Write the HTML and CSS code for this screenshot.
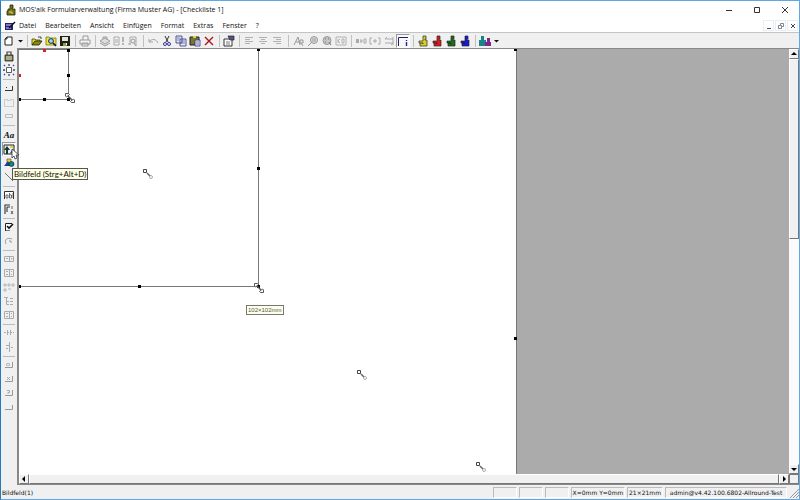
FILE: index.html
```html
<!DOCTYPE html>
<html lang="de">
<head>
  <meta charset="UTF-8">
  <meta name="viewport" content="width=device-width, initial-scale=1.0">
  <title>MOS'aik Formularverwaltung</title>
  <link rel="stylesheet" href="styles.css">
</head>
<body>
  <!-- icon set -->
  <svg class="symbols" aria-hidden="true">
    <symbol id="app" viewBox="0 0 12 12"><path d="M5 1h3v3H7v1h3v6H2V7h1V5h2z" fill="#77771a" stroke="#222200" stroke-width=".8"/><path d="M4 8h3v2" fill="none" stroke="#dede55"/></symbol>
    <symbol id="form" viewBox="0 0 12 12"><path d="M1 3h8v7H1z" fill="#20207a"/><path d="M2 5h6M2 8h5" stroke="#dde"/><path d="M5 8l6-6" stroke="#111" stroke-width="1.5"/></symbol>
    <symbol id="new" viewBox="0 0 12 12"><path d="M4 2h5v8H2V4zM4 2v2H2" fill="#fff" stroke="#222"/></symbol>
    <symbol id="open" viewBox="0 0 12 12"><path d="M1 10V4h3l1 1h4v2" fill="#dede30" stroke="#444400" stroke-width=".8"/><path d="M1 10l3-4h7l-3 4z" fill="#8a8a10" stroke="#222200" stroke-width=".8"/><path d="M7 2h3v2" fill="none" stroke="#222" stroke-width=".8"/></symbol>
    <symbol id="find" viewBox="0 0 12 12"><path d="M1 2h3l1 1h6v7H1z" fill="#f2e528" stroke="#666610" stroke-width=".7"/><circle cx="6" cy="6" r="2.4" fill="#8bdfee" stroke="#226"/><path d="M8 8l3 3" stroke="#113" stroke-width="1.6"/></symbol>
    <symbol id="save" viewBox="0 0 12 12"><path d="M1 1h10v10H1z" fill="#222211"/><path d="M3 2h6v4H3z" fill="#e5e5e5"/><path d="M4 8h4v3H4z" fill="#999944"/><path d="M7 8h1v2H7z" fill="#fff"/></symbol>
    <symbol id="print" viewBox="0 0 12 12"><path d="M4 5V1h5v4M1 5h10v4H1zM3 8h6v3H3z" fill="#f4f4f4" stroke="#999"/></symbol>
    <symbol id="stack" viewBox="0 0 12 12"><path d="M1 6l5-3 5 3-5 3zM1 8l5 3 5-3M4 4V2h4v3" fill="#ddd" stroke="#a0a0a0"/></symbol>
    <symbol id="pagealert" viewBox="0 0 12 12"><path d="M1 2h5v8H1zM2 5h3M2 7h3" fill="none" stroke="#aaa"/><path d="M10 2v5M10 8v2" stroke="#999" stroke-width="1.4"/></symbol>
    <symbol id="preview" viewBox="0 0 12 12"><path d="M3 10V2h6v9M4 9H1" fill="none" stroke="#aaa"/><circle cx="6" cy="6" r="2" fill="none" stroke="#999"/><path d="M7 8l2 3" stroke="#999"/></symbol>
    <symbol id="undo" viewBox="0 0 12 12"><path d="M2 7c3-4 7-3 9 1M2 4v3h4" fill="none" stroke="#a2a2a2"/></symbol>
    <symbol id="cut" viewBox="0 0 12 12"><path d="M4 1l3 6M8 1L5 7" stroke="#333"/><circle cx="4" cy="9" r="1.5" fill="none" stroke="#3434a0"/><circle cx="8" cy="9" r="1.5" fill="none" stroke="#3434a0"/></symbol>
    <symbol id="copy" viewBox="0 0 12 12"><path d="M1 1h6v7H1zM5 4h6v7H5z" fill="#e4e6f8" stroke="#333377" stroke-width=".8"/><path d="M2 3h3M2 5h2M6 6h4M6 8h4" stroke="#5560aa" stroke-width=".7"/></symbol>
    <symbol id="paste" viewBox="0 0 12 12"><path d="M1 2h9v8H1z" fill="#777733" stroke="#222"/><path d="M4 1h3v2H4z" fill="#ddd522"/><path d="M6 5h5v6H6z" fill="#e4e6f8" stroke="#33337a" stroke-width=".8"/><path d="M7 7h3M7 9h3" stroke="#55a" stroke-width=".7"/></symbol>
    <symbol id="delete" viewBox="0 0 12 12"><path d="M2 2l8 8M10 2l-8 8" stroke="#a81818" stroke-width="1.4"/></symbol>
    <symbol id="props" viewBox="0 0 12 12"><path d="M1 4h8v7H1z" fill="#fff" stroke="#333"/><path d="M3 7h4M3 9h4" stroke="#778"/><path d="M5 1h6v4H7z" fill="#555588" stroke="#222" stroke-width=".7"/></symbol>
    <symbol id="left" viewBox="0 0 12 12"><path d="M2 2.500h8M2 4.500h5M2 6.500h8M2 8.500h5" stroke="#b0b0b0"/></symbol>
    <symbol id="center" viewBox="0 0 12 12"><path d="M2 2.500h8M4 4.500h4M2 6.500h8M4 8.500h4" stroke="#b0b0b0"/></symbol>
    <symbol id="right" viewBox="0 0 12 12"><path d="M2 2.500h8M5 4.500h5M2 6.500h8M5 8.500h5" stroke="#b0b0b0"/></symbol>
    <symbol id="fontcolor" viewBox="0 0 12 12"><path d="M1 10l4-8 2 8M3 7h4M7 5h3v3H7zM8 8l2 3" fill="none" stroke="#999"/></symbol>
    <symbol id="fill" viewBox="0 0 12 12"><circle cx="7" cy="5" r="3.5" fill="#ddd" stroke="#999"/><path d="M1 11l4-4M5 4h4M5 6h4" stroke="#999"/></symbol>
    <symbol id="palette" viewBox="0 0 12 12"><circle cx="6" cy="5.500" r="4" fill="#c5c5c5" stroke="#999"/><path d="M4 4h1M7 4h1M4 7h1M8 7l2 3" stroke="#777"/></symbol>
    <symbol id="imgoff" viewBox="0 0 12 12"><path d="M1 2h10v8H1zM3 4v4M3 6l2-2M3 6l2 2M7 4h2v4H7z" fill="none" stroke="#b2b2b2"/></symbol>
    <symbol id="join" viewBox="0 0 12 12"><path d="M1 4h3v4H1z" fill="#aaa"/><path d="M5 6h3M6 4v4M9 4h2v4H9z" fill="none" stroke="#aaa"/></symbol>
    <symbol id="split" viewBox="0 0 12 12"><path d="M3 3H1v6h2M9 3h2v6H9M4 6h4M6 4v4" fill="none" stroke="#aaa"/></symbol>
    <symbol id="swap" viewBox="0 0 12 12"><path d="M2 4h8M4 2L2 4M2 8h8M8 10l2-2M10 2v8" fill="none" stroke="#aaa"/></symbol>
    <symbol id="ruler" viewBox="0 0 12 12"><path d="M1.500 11V2.500H11" fill="none" stroke="#222266"/><path d="M9.500 5v1M9.500 7v4" stroke="#2222aa" stroke-width="1.4"/></symbol>
    <symbol id="puzzle" viewBox="0 0 12 12"><path d="M6 1h3v3H8v1h2v6H3V8H2V6h4V4z" fill="currentColor" stroke="#282828" stroke-width=".7"/><path d="M3 8h3v1" fill="none" stroke="#222" stroke-width=".8"/></symbol>
    <symbol id="people" viewBox="0 0 12 12"><path d="M1 5h1V1h3v4h2v6H0V5z" fill="#18858a"/><path d="M7 7h1V3h3v4h1v4H6V7z" fill="#80258a"/></symbol>
    <symbol id="drop" viewBox="0 0 6 6"><path d="M1 2h5L3.500 4.500z" fill="#111"/></symbol>
    <symbol id="lock" viewBox="0 0 12 12"><path d="M4 5V2h4v3" fill="none" stroke="#444" stroke-width="1.2"/><path d="M2 5h8v6H2z" fill="#77773c" stroke="#222" stroke-width=".8"/><path d="M3 7h6M3 9h6" stroke="#ddd"/></symbol>
    <symbol id="anchor" viewBox="0 0 12 12"><path d="M3.500 3.500h5v5h-5z" fill="#fff" stroke="#333" stroke-width=".8"/><path d="M6 0v2M6 10v2M0 6h2M10 6h2M1 1l1 1M11 1l-1 1M1 11l1-1M11 11l-1-1" stroke="#334488" stroke-width="1.3"/></symbol>
    <symbol id="band" viewBox="0 0 12 12"><path d="M2 8.500h7.500V4M3 5.500h1" fill="none" stroke="#333"/></symbol>
    <symbol id="box" viewBox="0 0 12 12"><path d="M1.500 3.500h3v1h3v-1h3v7h-9z" fill="none" stroke="#aaa" stroke-dasharray="1 1"/></symbol>
    <symbol id="bar" viewBox="0 0 12 12"><path d="M2.500 4.500h7v3h-7z" fill="none" stroke="#bbb"/></symbol>
    <symbol id="image" viewBox="0 0 12 12"><path d="M1 2h10v9H1z" fill="#eef" stroke="#222"/><path d="M3 11V7H1l3-4 3 4H5v4z" fill="#123c20"/><path d="M7 10l2-3 2 3z" fill="#384888"/><path d="M7 3h3v2H7z" fill="#e4d335"/></symbol>
    <symbol id="shapes" viewBox="0 0 12 12"><path d="M4 2h4v5H4z" fill="#ead52c" stroke="#222" stroke-width=".5"/><path d="M1 9l4-5 3 5z" fill="#1d3e9c"/><circle cx="8.500" cy="7" r="2.500" fill="#12897a" stroke="#113" stroke-width=".6"/></symbol>
    <symbol id="line" viewBox="0 0 12 12"><path d="M2 2l8 8" stroke="#555" stroke-width=".8"/></symbol>
    <symbol id="edit" viewBox="0 0 12 12"><path d="M1.500 10V2.500h9V10" fill="#fff" stroke="#333"/><path d="M3 6h2v3H3zM6.500 4v5h2V6h-2M10 4v5" fill="none" stroke="#333" stroke-width=".7"/></symbol>
    <symbol id="ruled" viewBox="0 0 12 12"><path d="M2 11V2h5M4 4v5M4 4h3" fill="none" stroke="#333" stroke-width="1.1"/><path d="M9 3v3M8 8l2 3M10 8l-2 3" stroke="#444" stroke-width=".8"/></symbol>
    <symbol id="check" viewBox="0 0 12 12"><path d="M2.500 10V2.500H9" fill="#fff" stroke="#222"/><path d="M4 5l2 2 4-4" fill="none" stroke="#111" stroke-width="1.6"/><path d="M3 9.500h4" stroke="#777"/></symbol>
    <symbol id="radio" viewBox="0 0 12 12"><path d="M3 9C1 5 4 2 9 4M6 6h2v2" fill="none" stroke="#999"/></symbol>
    <symbol id="combo" viewBox="0 0 12 12"><path d="M1.500 3.500h9v5h-9zM6.500 3v6M3 5.500h2M8 5.500h1v1" fill="none" stroke="#aaa"/></symbol>
    <symbol id="list" viewBox="0 0 12 12"><path d="M1.500 2.500h9v7h-9zM6.500 2v8M3 4.500h2M3 7.500h2M8 4.500h1M8 7.500h1" fill="none" stroke="#aaa"/></symbol>
    <symbol id="tabs" viewBox="0 0 12 12"><path d="M1 3h2v2H1zM5 3h2v2H5zM9 3h2v2H9zM1 8h2v2H1zM5 8h3" fill="none" stroke="#aaa" stroke-width=".8"/></symbol>
    <symbol id="tree" viewBox="0 0 12 12"><path d="M1 2.500h4M3.500 3v6.500H6M3 6.500h3M7 6.500h3M7 9.500h3M7 3.500h3" fill="none" stroke="#aaa"/></symbol>
    <symbol id="hgrid" viewBox="0 0 12 12"><path d="M1 5.500h10M4.500 3v5M7.500 3v5" stroke="#aaa" stroke-dasharray="2 1"/></symbol>
    <symbol id="vgrid" viewBox="0 0 12 12"><path d="M6.500 1v10M3 4.500h3M8 6.500h2M3 7.500h2" stroke="#aaa"/></symbol>
    <symbol id="sum" viewBox="0 0 12 12"><path d="M2 8.500h7.500V3" fill="none" stroke="#999"/><path d="M3.500 4.500h3v2h-3z" fill="none" stroke="#bbb"/></symbol>
    <symbol id="times" viewBox="0 0 12 12"><path d="M2 8.500h7.500V3" fill="none" stroke="#999"/><path d="M4 4l3 3M7 4L4 7" stroke="#aaa"/></symbol>
    <symbol id="query" viewBox="0 0 12 12"><path d="M2 8.500h7.500V3" fill="none" stroke="#999"/><path d="M4 3.500h2.500v2H5V7" fill="none" stroke="#aaa"/></symbol>
    <symbol id="corner" viewBox="0 0 12 12"><path d="M2 8.500h7.500V4" fill="none" stroke="#999"/></symbol>
    <symbol id="link" viewBox="0 0 12 12"><path d="M5 5l3 3" stroke="#666" stroke-width="1.5"/><path d="M1.500 1.500h3v3h-3z" fill="#fff" stroke="#444"/><circle cx="9" cy="9" r="1.500" fill="#fff" stroke="#999" stroke-width=".8"/></symbol>
    <symbol id="resize" viewBox="0 0 12 12"><path d="M4 4l4 4" stroke="#555" stroke-width="1.5"/><path d="M1.500 1.500h3l1 1-3 2.500-1-1zM10.500 10.500h-3l-1-1 3-2.500 1 1z" fill="#fff" stroke="#444" stroke-width=".9"/></symbol>
  </svg>

  <div class="window">
    <header class="titlebar">
      <svg class="icon"><use href="#app"/></svg>
      <h1>MOS'aik Formularverwaltung (Firma Muster AG) - [Checkliste 1]</h1>
      <div class="controls">
        <button aria-label="Minimieren"><svg viewBox="0 0 8 8"><path d="M1 4.500h6" stroke="#333"/></svg></button>
        <button aria-label="Maximieren"><svg viewBox="0 0 8 8"><path d="M1.500 1.500h5v5h-5z" fill="none" stroke="#333"/></svg></button>
        <button aria-label="Schließen"><svg viewBox="0 0 8 8"><path d="M1 1l6 6M7 1L1 7" stroke="#333"/></svg></button>
      </div>
    </header>

    <nav class="menubar">
      <svg class="icon"><use href="#form"/></svg>
      <button>Datei</button>
      <button>Bearbeiten</button>
      <button>Ansicht</button>
      <button>Einfügen</button>
      <button>Format</button>
      <button>Extras</button>
      <button>Fenster</button>
      <button>?</button>
      <div class="mdi">
        <button aria-label="Minimieren"><svg viewBox="0 0 8 8"><path d="M2 6.500h4" stroke="#446"/></svg></button>
        <button aria-label="Wiederherstellen"><svg viewBox="0 0 8 8"><path d="M1.500 3.500h3v3h-3zM3.500 3V1.500h3v3H5" fill="none" stroke="#667" stroke-width=".8"/></svg></button>
        <button aria-label="Schließen"><svg viewBox="0 0 8 8"><path d="M2 2l4 4M6 2L2 6" stroke="#446"/></svg></button>
      </div>
    </nav>

    <div class="toolbar">
      <button aria-label="Neu"><svg class="icon"><use href="#new"/></svg></button>
      <button class="arrow" aria-label="Neu Auswahl"><svg><use href="#drop"/></svg></button>
      <span class="sep"></span>
      <button aria-label="Öffnen"><svg class="icon"><use href="#open"/></svg></button>
      <button aria-label="Suchen"><svg class="icon"><use href="#find"/></svg></button>
      <button aria-label="Speichern"><svg class="icon"><use href="#save"/></svg></button>
      <span class="sep"></span>
      <button aria-label="Drucken"><svg class="icon"><use href="#print"/></svg></button>
      <span class="sep"></span>
      <button aria-label="Stapel"><svg class="icon"><use href="#stack"/></svg></button>
      <button aria-label="Prüfen"><svg class="icon"><use href="#pagealert"/></svg></button>
      <button aria-label="Vorschau"><svg class="icon"><use href="#preview"/></svg></button>
      <span class="sep"></span>
      <button aria-label="Rückgängig"><svg class="icon"><use href="#undo"/></svg></button>
      <button aria-label="Ausschneiden"><svg class="icon"><use href="#cut"/></svg></button>
      <button aria-label="Kopieren"><svg class="icon"><use href="#copy"/></svg></button>
      <button aria-label="Einfügen"><svg class="icon"><use href="#paste"/></svg></button>
      <button aria-label="Löschen"><svg class="icon"><use href="#delete"/></svg></button>
      <span class="sep"></span>
      <button aria-label="Eigenschaften"><svg class="icon"><use href="#props"/></svg></button>
      <span class="sep"></span>
      <button aria-label="Linksbündig"><svg class="icon"><use href="#left"/></svg></button>
      <button aria-label="Zentriert"><svg class="icon"><use href="#center"/></svg></button>
      <button aria-label="Rechtsbündig"><svg class="icon"><use href="#right"/></svg></button>
      <span class="sep wide"></span>
      <button aria-label="Schriftfarbe"><svg class="icon"><use href="#fontcolor"/></svg></button>
      <button aria-label="Füllfarbe"><svg class="icon"><use href="#fill"/></svg></button>
      <button aria-label="Palette"><svg class="icon"><use href="#palette"/></svg></button>
      <button aria-label="Bild"><svg class="icon"><use href="#imgoff"/></svg></button>
      <span class="sep"></span>
      <button aria-label="Verbinden"><svg class="icon"><use href="#join"/></svg></button>
      <button aria-label="Teilen"><svg class="icon"><use href="#split"/></svg></button>
      <button aria-label="Tauschen"><svg class="icon"><use href="#swap"/></svg></button>
      <button class="pressed" aria-label="Lineal"><svg class="icon"><use href="#ruler"/></svg></button>
      <span class="sep"></span>
      <button class="yellow" aria-label="Modul gelb"><svg class="icon"><use href="#puzzle"/></svg></button>
      <button class="red" aria-label="Modul rot"><svg class="icon"><use href="#puzzle"/></svg></button>
      <button class="green" aria-label="Modul grün"><svg class="icon"><use href="#puzzle"/></svg></button>
      <button class="blue" aria-label="Modul blau"><svg class="icon"><use href="#puzzle"/></svg></button>
      <span class="sep"></span>
      <button aria-label="Benutzer"><svg class="icon"><use href="#people"/></svg></button>
      <button class="arrow" aria-label="Benutzer Auswahl"><svg><use href="#drop"/></svg></button>
    </div>

    <main class="workspace">
      <div class="toolbox">
        <button aria-label="Sperren"><svg class="icon"><use href="#lock"/></svg></button>
        <button aria-label="Anker"><svg class="icon"><use href="#anchor"/></svg></button>
        <span class="sep"></span>
        <button aria-label="Bereich"><svg class="icon"><use href="#band"/></svg></button>
        <button aria-label="Rahmen"><svg class="icon"><use href="#box"/></svg></button>
        <button aria-label="Balken"><svg class="icon"><use href="#bar"/></svg></button>
        <span class="sep wide"></span>
        <button class="text-tool">Aa</button>
        <div class="tool">
          <button class="pressed" aria-label="Bildfeld" aria-describedby="tip"><svg class="icon"><use href="#image"/></svg></button>
          <svg class="cursor" viewBox="0 0 8 12"><path d="M1 1v9l2-2 1 3 2-1-1-3h3z" fill="#fff" stroke="#333" stroke-width=".8"/></svg>
          <span class="tooltip" id="tip" role="tooltip">Bildfeld (Strg+Alt+D)</span>
        </div>
        <button aria-label="Formen"><svg class="icon"><use href="#shapes"/></svg></button>
        <button aria-label="Linie"><svg class="icon"><use href="#line"/></svg></button>
        <span class="sep"></span>
        <button aria-label="Textfeld"><svg class="icon"><use href="#edit"/></svg></button>
        <button aria-label="Memofeld"><svg class="icon"><use href="#ruled"/></svg></button>
        <span class="sep"></span>
        <button aria-label="Kontrollfeld"><svg class="icon"><use href="#check"/></svg></button>
        <button aria-label="Optionsfeld"><svg class="icon"><use href="#radio"/></svg></button>
        <span class="sep"></span>
        <button aria-label="Kombinationsfeld"><svg class="icon"><use href="#combo"/></svg></button>
        <button aria-label="Liste"><svg class="icon"><use href="#list"/></svg></button>
        <button aria-label="Register"><svg class="icon"><use href="#tabs"/></svg></button>
        <button aria-label="Baum"><svg class="icon"><use href="#tree"/></svg></button>
        <button aria-label="Tabelle"><svg class="icon"><use href="#list"/></svg></button>
        <span class="sep"></span>
        <button aria-label="Zeile"><svg class="icon"><use href="#hgrid"/></svg></button>
        <button aria-label="Spalte"><svg class="icon"><use href="#vgrid"/></svg></button>
        <span class="sep"></span>
        <button aria-label="Summe"><svg class="icon"><use href="#sum"/></svg></button>
        <button aria-label="Produkt"><svg class="icon"><use href="#times"/></svg></button>
        <button aria-label="Abfrage"><svg class="icon"><use href="#query"/></svg></button>
        <button aria-label="Ecke"><svg class="icon"><use href="#corner"/></svg></button>
      </div>

      <div class="editor">
        <div class="canvas">
          <div class="page">
            <i class="handle page-top"></i>
            <i class="handle page-side"></i>
            <div class="frame large">
              <i class="handle e"></i><i class="handle s"></i><i class="handle se"></i><i class="handle sw"></i><i class="handle ne"></i>
            </div>
            <div class="frame small">
              <i class="handle n red-handle"></i><i class="handle w red-handle"></i>
              <i class="handle e"></i><i class="handle s"></i><i class="handle se"></i><i class="handle sw"></i><i class="handle ne"></i>
            </div>
            <svg class="icon mark m1"><use href="#resize"/></svg>
            <svg class="icon mark m2"><use href="#link"/></svg>
            <svg class="icon mark m3"><use href="#resize"/></svg>
            <svg class="icon mark m4"><use href="#link"/></svg>
            <svg class="icon mark m5"><use href="#link"/></svg>
            <span class="size">102×102mm</span>
          </div>
        </div>
        <div class="scroll vertical">
          <button aria-label="Nach oben"><svg viewBox="0 0 8 8"><path d="M1 5h6L4 2z"/></svg></button>
          <div class="thumb"></div>
          <div class="track"></div>
          <button aria-label="Nach unten"><svg viewBox="0 0 8 8"><path d="M1 3h6L4 6z"/></svg></button>
        </div>
        <div class="scroll horizontal">
          <button aria-label="Nach links"><svg viewBox="0 0 8 8"><path d="M5 1v6L2 4z"/></svg></button>
          <div class="thumb"></div>
          <button aria-label="Nach rechts"><svg viewBox="0 0 8 8"><path d="M3 1v6l3-3z"/></svg></button>
        </div>
        <div class="scroll-corner"></div>
      </div>
    </main>

    <footer class="statusbar">
      <span class="message">Bildfeld(1)</span>
      <span class="cell"></span>
      <span class="cell"></span>
      <span class="cell"></span>
      <span class="cell position">X=0mm Y=0mm</span>
      <span class="cell dimension">21×21mm</span>
      <span class="cell user">admin@v4.42.100.6802-Allround-Test</span>
      <svg class="grip" viewBox="0 0 10 10"><path d="M1 10l9-9M4 10l6-6M7 10l3-3" stroke="#999"/></svg>
    </footer>
  </div>
</body>
</html>
```
FILE: styles.css
```css
* {
  box-sizing: border-box;
}
body {
  margin: 0;
  font-family: "Open Sans", "Noto Sans", sans-serif;
  font-size: 7px;
  line-height: 10px;
  color: #111;
}
button {
  display: flex;
  align-items: center;
  justify-content: center;
  margin: 0;
  padding: 0;
  border: none;
  background: none;
  font: inherit;
  color: inherit;
}
.symbols {
  position: absolute;
  width: 0;
  height: 0;
}
.icon {
  display: block;
  flex: none;
  width: 12px;
  height: 12px;
}
.window {
  display: flex;
  flex-direction: column;
  height: 100vh;
  border: 1px solid #60a8e4;
  border-left: 1px solid #2878bc;
  background: #f0f0f0;
}

/* title and menu */
.titlebar, .menubar {
  display: flex;
  align-items: center;
  background: #fff;
}
.titlebar {
  height: 18px;
  padding-left: 4px;
}
.titlebar h1 {
  margin: 0 0 0 2px;
  font-size: 7px;
  font-weight: normal;
}
.controls {
  display: flex;
  margin-left: auto;
}
.controls button {
  width: 28px;
  height: 16px;
}
.controls svg, .mdi svg {
  width: 8px;
  height: 8px;
}
.menubar {
  height: 13px;
  padding: 0 1px 0 3px;
}
.menubar > button {
  padding: 0 5px 0 4px;
}
.menubar > .icon {
  margin-right: -1px;
}
.mdi {
  display: flex;
  gap: 1px;
  margin-left: auto;
}
.mdi button {
  width: 11px;
  height: 11px;
  border: 1px solid #e8eef4;
}

/* tools */
.toolbar {
  display: flex;
  align-items: center;
  height: 16px;
  padding-left: 1px;
  border-top: 1px solid #c4c4c4;
}
.toolbar button {
  width: 14px;
  height: 14px;
}
.toolbar .arrow {
  width: 8px;
}
.arrow svg {
  width: 6px;
  height: 6px;
}
.toolbar .sep {
  width: 1px;
  height: 12px;
  margin: 0 2px 0 3px;
  background: #c0c0c0;
}
.toolbar .wide {
  margin: 0 3px 0 4px;
}
button.pressed {
  border: 1px solid #fff;
  border-top-color: #999;
  border-left-color: #999;
  background: #f8f8f8;
}
.yellow {
  color: #d8cf24;
}
.red {
  color: #d81c1c;
}
.green {
  color: #187018;
}
.blue {
  color: #1818d8;
}
.workspace {
  display: flex;
  flex: 1;
  min-height: 0;
}
.toolbox {
  display: flex;
  flex-direction: column;
  width: 16px;
  padding: 1px 0 0 1px;
}
.toolbox button {
  flex: none;
  width: 14px;
  height: 14px;
}
.toolbox .sep {
  flex: none;
  height: 1px;
  margin: 2px 2px 1px 1px;
  background: #bcbcbc;
}
.toolbox .wide {
  margin-bottom: 2px;
}
.toolbox .text-tool {
  font: italic bold 9px "Liberation Serif", serif;
}
.tool {
  position: relative;
}
.cursor {
  position: absolute;
  z-index: 3;
  left: 9px;
  top: 6px;
  width: 8px;
  height: 12px;
}
.tooltip {
  position: absolute;
  z-index: 2;
  left: 10px;
  top: 26px;
  padding: 0 1px;
  border: 1px solid #555;
  background: #ffffe1;
  font-family: Lato, sans-serif;
  font-size: 8px;
  white-space: nowrap;
}

/* document area */
.editor {
  display: grid;
  flex: 1;
  grid-template-columns: 1fr 10px;
  grid-template-rows: 1fr 10px;
  min-width: 0;
  border: solid #888;
  border-width: 1px 0 1px 2px;
}
.canvas {
  overflow: hidden;
  background: #ababab;
}
.page {
  position: relative;
  width: 498px;
  height: 100%;
  border-right: 1px solid #777;
  background: #fff;
}
.frame {
  position: absolute;
  top: 0;
  left: 0;
  border: 1px solid #777;
  border-width: 0 1px 1px 0;
}
.large {
  width: 240px;
  height: 238px;
}
.small {
  width: 50px;
  height: 51px;
  border-top-width: 1px;
}
.handle {
  position: absolute;
  width: 3px;
  height: 3px;
  background: #000;
}
.n {
  top: -1px;
  left: calc(50% - 1px);
}
.w {
  left: -1px;
  top: calc(50% - 1px);
}
.e {
  right: -2px;
  top: calc(50% - 1px);
}
.s {
  bottom: -2px;
  left: calc(50% - 1px);
}
.se {
  right: -2px;
  bottom: -2px;
}
.sw {
  left: -1px;
  bottom: -2px;
}
.ne {
  right: -2px;
  top: -1px;
}
.red-handle {
  background: #e02020;
}
.page-top {
  top: -1px;
  right: -1px;
}
.page-side {
  top: 288px;
  right: -1px;
}
.mark {
  position: absolute;
}
.m1 {
  left: 45px;
  top: 43px;
}
.m2 {
  left: 123px;
  top: 119px;
}
.m3 {
  left: 234px;
  top: 233px;
}
.m4 {
  left: 337px;
  top: 320px;
}
.m5 {
  left: 456px;
  top: 412px;
}
.size {
  position: absolute;
  left: 227px;
  top: 256px;
  padding: 0 1px;
  border: 1px solid #777;
  background: #ffffe9;
  font-family: "Liberation Sans", sans-serif;
  font-size: 6px;
  line-height: 8px;
  color: #555;
}
.scroll {
  display: flex;
  background: #fbfbfb;
}
.vertical {
  flex-direction: column;
}
.scroll button {
  flex: none;
  width: 10px;
  height: 10px;
  border: 1px solid #777;
  border-top-color: #fff;
  border-left-color: #fff;
  background: #f0f0f0;
}
.scroll svg {
  width: 8px;
  height: 8px;
}
.thumb {
  background: #f0f0f0;
  border: 1px solid #fff;
  border-right-color: #777;
  border-bottom-color: #777;
}
.vertical .thumb {
  flex: 178;
}
.track {
  flex: 226;
}
.horizontal .thumb {
  flex: 1;
}
.scroll-corner {
  border: 1px solid #777;
}

/* status */
.statusbar {
  display: flex;
  align-items: center;
  gap: 2px;
  height: 14px;
  padding: 1px 0 0 1px;
  font-family: "DejaVu Sans", sans-serif;
  font-size: 6px;
}
.message {
  flex: 1;
}
.cell {
  width: 24px;
  height: 11px;
  border: 1px solid #fff;
  border-top-color: #bbb;
  border-left-color: #bbb;
  text-align: center;
  white-space: nowrap;
}
.position {
  width: 54px;
}
.dimension {
  width: 36px;
}
.user {
  width: 122px;
}
.grip {
  width: 10px;
  height: 10px;
}
```
